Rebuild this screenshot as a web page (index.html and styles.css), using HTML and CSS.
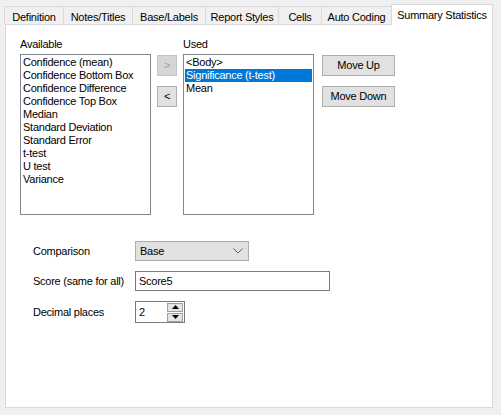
FILE: index.html
```html
<!DOCTYPE html>
<html>
<head>
<meta charset="utf-8">
<link rel="stylesheet" href="styles.css">
</head>
<body>
<div class="window">
  <div class="tabs">
    <div class="tab t1">Definition</div>
    <div class="tab t2">Notes/Titles</div>
    <div class="tab t3">Base/Labels</div>
    <div class="tab t4">Report Styles</div>
    <div class="tab t5">Cells</div>
    <div class="tab t6">Auto Coding</div>
    <div class="tab t7 active">Summary Statistics</div>
  </div>
  <div class="panel">
    <div class="top">
      <div class="col">
        <div class="label">Available</div>
        <div class="listbox">
          <div class="item">Confidence (mean)</div>
          <div class="item">Confidence Bottom Box</div>
          <div class="item">Confidence Difference</div>
          <div class="item">Confidence Top Box</div>
          <div class="item">Median</div>
          <div class="item">Standard Deviation</div>
          <div class="item">Standard Error</div>
          <div class="item">t-test</div>
          <div class="item">U test</div>
          <div class="item">Variance</div>
        </div>
      </div>
      <div class="col arrows">
        <div class="btn small disabled">&gt;</div>
        <div class="btn small">&lt;</div>
      </div>
      <div class="col">
        <div class="label">Used</div>
        <div class="listbox">
          <div class="item">&lt;Body&gt;</div>
          <div class="item selected">Significance (t-test)</div>
          <div class="item">Mean</div>
        </div>
      </div>
      <div class="col moves">
        <div class="btn wide">Move Up</div>
        <div class="btn wide">Move Down</div>
      </div>
    </div>
    <div class="form">
      <div class="flabel">Comparison</div>
      <div class="combo">
        <span class="combo-text">Base</span>
        <svg class="chev" width="10" height="6" viewBox="0 0 10 6"><polyline points="0.5,0.5 5,5 9.5,0.5" fill="none" stroke="#606060" stroke-width="1"/></svg>
      </div>
      <div class="flabel">Score (same for all)</div>
      <div class="textbox">Score5</div>
      <div class="flabel">Decimal places</div>
      <div class="numeric">
        <span class="num-text">2</span>
        <div class="spin">
          <div class="spin-btn"><svg width="7" height="4" viewBox="0 0 7 4"><polygon points="0,4 7,4 3.5,0" fill="#000"/></svg></div>
          <div class="spin-btn"><svg width="7" height="4" viewBox="0 0 7 4"><polygon points="0,0 7,0 3.5,4" fill="#000"/></svg></div>
        </div>
      </div>
    </div>
  </div>
</div>
</body>
</html>
```
FILE: styles.css
```css
* { box-sizing: border-box; }
html, body {
  margin: 0;
  padding: 0;
  background: #f0f0f0;
}
body {
  width: 501px;
  height: 415px;
  overflow: hidden;
  font-family: "Liberation Sans", Arial, sans-serif;
  font-size: 11px;
  letter-spacing: -0.25px;
  color: #000;
}
.window {
  width: 501px;
  height: 415px;
}
.tabs {
  display: flex;
  align-items: flex-end;
  height: 24px;
  padding-left: 4px;
}
.tab {
  height: 18px;
  border: 1px solid #d9d9d9;
  border-bottom: none;
  margin-right: -1px;
  background: #f0f0f0;
  text-align: center;
  line-height: 14px;
  padding-top: 3px;
  white-space: nowrap;
}
.t1 { width: 60px; }
.t2 { width: 70px; }
.t3 { width: 74px; }
.t4 { width: 74px; }
.t5 { width: 44px; }
.t6 { width: 71px; }
.t7 { width: 102px; }
.tab.active {
  height: 21px;
  margin-bottom: -1px;
  background: #fff;
  position: relative;
  z-index: 1;
  line-height: 14px;
  padding-top: 3px;
}
.panel {
  margin-left: 5px;
  width: 488px;
  height: 384px;
  background: #fff;
  border: 1px solid #d9d9d9;
  padding: 13px 0 0 14px;
}
.top {
  display: flex;
  align-items: flex-start;
}
.col {
  display: flex;
  flex-direction: column;
}
.label {
  height: 13px;
  line-height: 13px;
  margin-bottom: 3px;
}
.listbox {
  width: 131px;
  height: 161px;
  border: 1px solid #828790;
  background: #fff;
  padding: 1px 1px;
}
.item {
  height: 13px;
  line-height: 13px;
  padding-left: 1px;
  white-space: nowrap;
}
.item.selected {
  background: #0078d7;
  color: #fff;
}
.arrows {
  margin: 17px 6px 0 6px;
  gap: 10px;
}
.moves {
  margin: 17px 0 0 8px;
  gap: 10px;
}
.btn {
  height: 21px;
  background: #e1e1e1;
  border: 1px solid #adadad;
  display: flex;
  align-items: center;
  justify-content: center;
  line-height: 13px;
}
.btn.small { width: 20px; }
.btn.wide { width: 73px; }
.btn.disabled {
  background: #d6d6d6;
  border-color: #c4c4c4;
  color: #a0a0a0;
}
.form {
  margin: 26px 0 0 13px;
  display: grid;
  grid-template-columns: 102px auto;
  row-gap: 10px;
  align-items: center;
  justify-items: start;
}
.flabel {
  line-height: 13px;
}
.combo {
  width: 114px;
  height: 20px;
  background: #e1e1e1;
  border: 1px solid #adadad;
  display: flex;
  align-items: center;
  justify-content: space-between;
  padding: 0 5px 0 4px;
}
.chev { display: block; }
.textbox {
  width: 195px;
  height: 20px;
  border: 1px solid #7a7a7a;
  background: #fff;
  padding-left: 3px;
  line-height: 18px;
}
.numeric {
  width: 50px;
  height: 22px;
  border: 1px solid #7a7a7a;
  background: #fff;
  display: flex;
  align-items: center;
  justify-content: space-between;
  padding: 0 1px 0 3px;
}
.spin {
  display: flex;
  flex-direction: column;
  gap: 1px;
  width: 16px;
}
.spin-btn {
  height: 9px;
  background: #e5e5e5;
  border: 1px solid #a0a0a0;
  display: flex;
  align-items: center;
  justify-content: center;
}
.spin-btn svg { display: block; }
```
